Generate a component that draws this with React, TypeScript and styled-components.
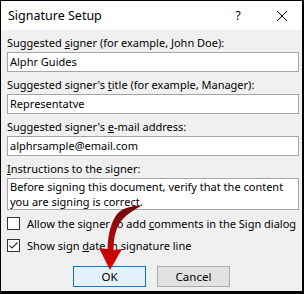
import React from 'react';
import styled, { createGlobalStyle } from 'styled-components';

const GlobalStyle = createGlobalStyle`
  html, body {
    margin: 0;
    padding: 0;
    background: #000;
  }
  * {
    box-sizing: border-box;
  }
`;

const Frame = styled.div`
  position: relative;
  width: 304px;
  height: 294px;
  border-style: solid;
  border-color: #000;
  border-width: 1px 2px 3px 1px;
  background: #f0f0f0;
  font-family: 'Segoe UI', 'Noto Sans', sans-serif;
  font-size: 11px;
  color: #000;
  display: flex;
  flex-direction: column;
  overflow: hidden;
`;

const TitleBar = styled.div`
  height: 29px;
  background: #fff;
  display: flex;
  align-items: center;
  padding-left: 7px;
`;

const Title = styled.div`
  flex: 1;
  font-size: 12.5px;
  line-height: 16px;
`;

const TitleButton = styled.div<{ $width: number }>`
  width: ${(p) => p.$width}px;
  height: 29px;
  display: flex;
  align-items: center;
  justify-content: center;
  font-size: 12px;
`;

const Body = styled.div`
  flex: 1;
  padding: 5px 3px 0 6px;
  display: flex;
  flex-direction: column;
`;

const Field = styled.div`
  display: flex;
  flex-direction: column;
  margin-bottom: 5px;
`;

const Label = styled.div`
  line-height: 16px;
  height: 16px;
  margin-bottom: 1px;
  white-space: nowrap;
`;

const Key = styled.span`
  text-decoration: underline;
  text-underline-offset: 1px;
`;

const TextBox = styled.div<{ $lines?: number }>`
  background: #fff;
  border: 1px solid #a5a5a5;
  height: ${(p) => (p.$lines && p.$lines > 1 ? 32 : 20)}px;
  padding: ${(p) => (p.$lines && p.$lines > 1 ? '0 2px' : '1px 2px')};
  line-height: ${(p) => (p.$lines && p.$lines > 1 ? '15px' : '16px')};
  white-space: pre-wrap;
`;

const CheckList = styled.div`
  display: flex;
  flex-direction: column;
  gap: 9px;
  margin-top: 2px;
`;

const CheckRow = styled.label`
  display: flex;
  align-items: center;
  gap: 7px;
  height: 13px;
  white-space: nowrap;
`;

const Box = styled.span`
  width: 13px;
  height: 13px;
  border: 1px solid #333;
  background: #fff;
  display: flex;
  align-items: center;
  justify-content: center;
  flex-shrink: 0;
`;

const Buttons = styled.div`
  display: flex;
  justify-content: center;
  gap: 11px;
  margin-top: 14px;
  padding-right: 3px;
`;

const Button = styled.button<{ $primary?: boolean }>`
  width: 73px;
  height: 21px;
  font-family: inherit;
  font-size: 11.5px;
  color: #000;
  padding: 0;
  border: 1px solid ${(p) => (p.$primary ? '#0078d7' : '#adadad')};
  background: ${(p) => (p.$primary ? '#e5f1fb' : '#e1e1e1')};
`;

const Arrow = styled.svg`
  position: absolute;
  left: -1px;
  top: -1px;
  pointer-events: none;
`;

function Check({ checked }: { checked?: boolean }) {
  return (
    <Box>
      {checked && (
        <svg width="11" height="11" viewBox="0 0 11 11">
          <path d="M1.5 5.5 L4 8 L9.5 2.5" fill="none" stroke="#333" strokeWidth="1.2" />
        </svg>
      )}
    </Box>
  );
}

export default function App() {
  return (
    <>
      <GlobalStyle />
      <Frame>
        <TitleBar>
          <Title>Signature Setup</Title>
          <TitleButton $width={46}>?</TitleButton>
          <TitleButton $width={41}>
            <svg width="10" height="10" viewBox="0 0 10 10">
              <path d="M0 0 L10 10 M10 0 L0 10" stroke="#000" strokeWidth="1" />
            </svg>
          </TitleButton>
        </TitleBar>
        <Body>
          <Field>
            <Label>
              Suggested <Key>s</Key>igner (for example, John Doe):
            </Label>
            <TextBox>Alphr Guides</TextBox>
          </Field>
          <Field>
            <Label>
              Suggested signer's <Key>t</Key>itle (for example, Manager):
            </Label>
            <TextBox>Representatve</TextBox>
          </Field>
          <Field>
            <Label>
              Suggested signer's <Key>e</Key>-mail address:
            </Label>
            <TextBox>alphrsample@email.com</TextBox>
          </Field>
          <Field>
            <Label>
              <Key>I</Key>nstructions to the signer:
            </Label>
            <TextBox $lines={2}>
              Before signing this document, verify that the content you are signing is correct.
            </TextBox>
          </Field>
          <CheckList>
            <CheckRow>
              <Check />
              <span>
                Allow the signer to add <Key>c</Key>omments in the Sign dialog
              </span>
            </CheckRow>
            <CheckRow>
              <Check checked />
              <span>
                Show sign <Key>d</Key>ate in signature line
              </span>
            </CheckRow>
          </CheckList>
          <Buttons>
            <Button $primary>OK</Button>
            <Button>Cancel</Button>
          </Buttons>
        </Body>
        <Arrow width="304" height="294" viewBox="0 0 304 294">
          <defs>
            <linearGradient id="arrowFill" x1="0" y1="0" x2="0" y2="1">
              <stop offset="0" stopColor="#6e0808" />
              <stop offset="0.45" stopColor="#a50a0a" />
              <stop offset="1" stopColor="#e00000" />
            </linearGradient>
          </defs>
          <path
            d="M141 206 C134 205 123 208 118 213 C111 221 108 234 107.5 249 L99 248 L110 270 L122 249 L113.5 250 C113.5 238 116 227 122 220 C127 214 134 210 141 206 Z"
            fill="url(#arrowFill)"
          />
        </Arrow>
      </Frame>
    </>
  );
}
